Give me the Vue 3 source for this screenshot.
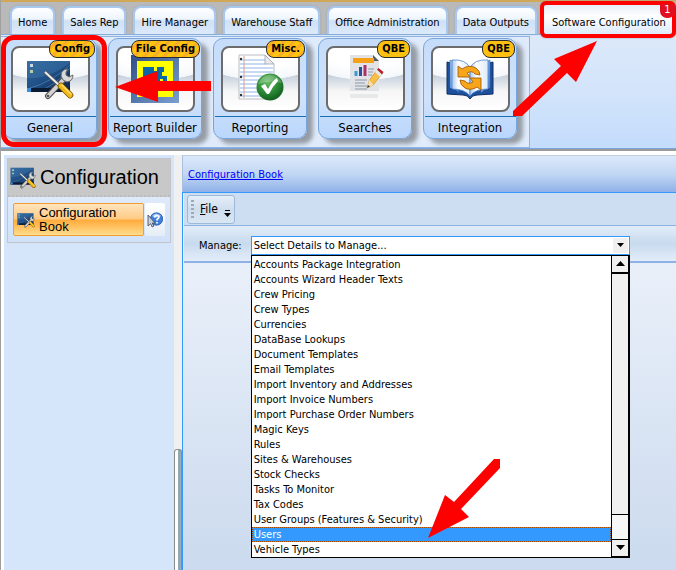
<script setup>
import { ref } from 'vue'

const tabs = [
  { name: 'Home' },
  { name: 'Sales Rep' },
  { name: 'Hire Manager' },
  { name: 'Warehouse Staff' },
  { name: 'Office Administration' },
  { name: 'Data Outputs' },
  { name: 'Software Configuration', active: true, count: 1 },
]

const tiles = [
  { name: 'General', badge: 'Config', icon: 'desk', striped: true, marked: true },
  { name: 'Report Builder', badge: 'File Config', icon: 'builder', striped: true },
  { name: 'Reporting', badge: 'Misc.', icon: 'report', striped: true },
  { name: 'Searches', badge: 'QBE', icon: 'search' },
  { name: 'Integration', badge: 'QBE', icon: 'sync' },
]

const options = [
  'Accounts Package Integration',
  'Accounts Wizard Header Texts',
  'Crew Pricing',
  'Crew Types',
  'Currencies',
  'DataBase Lookups',
  'Document Templates',
  'Email Templates',
  'Import Inventory and Addresses',
  'Import Invoice Numbers',
  'Import Purchase Order Numbers',
  'Magic Keys',
  'Rules',
  'Sites & Warehouses',
  'Stock Checks',
  'Tasks To Monitor',
  'Tax Codes',
  'User Groups (Features & Security)',
  'Users',
  'Vehicle Types',
]
const selected = ref('Users')
</script>

<template>
  <div class="app">
    <svg class="defs" width="0" height="0" aria-hidden="true">
      <defs>
        <linearGradient id="gDesk" x1="0" y1="0" x2="1" y2="1">
          <stop offset="0" stop-color="#2f6598" /><stop offset=".5" stop-color="#1f4f86" /><stop offset="1" stop-color="#0c2244" />
        </linearGradient>
        <linearGradient id="gBuild" x1="0" y1="0" x2="1" y2="1">
          <stop offset="0" stop-color="#2f4f86" /><stop offset="1" stop-color="#7ba0d0" />
        </linearGradient>
        <radialGradient id="gTick" cx=".4" cy=".3" r=".75">
          <stop offset="0" stop-color="#6fc06a" /><stop offset=".55" stop-color="#2c8a35" /><stop offset="1" stop-color="#0e5a1a" />
        </radialGradient>
        <linearGradient id="gPage" x1="0" y1="0" x2="1" y2="0">
          <stop offset="0" stop-color="#a9c8f0" /><stop offset=".35" stop-color="#ffffff" /><stop offset="1" stop-color="#dcebfb" />
        </linearGradient>
        <linearGradient id="gPageBlue" x1="0" y1="0" x2="1" y2="1">
          <stop offset="0" stop-color="#b9d4f4" /><stop offset="1" stop-color="#3f80cf" />
        </linearGradient>
        <symbol id="i-desk" viewBox="0 0 48 42">
          <rect x="1" y="3" width="43" height="31" fill="url(#gDesk)" />
          <path d="M1 20Q20 22 44 5V3H1z" fill="#4a80b4" opacity=".35" />
          <path d="M10 34Q30 28 44 10M4 30Q26 24 44 7" stroke="#79a7d2" stroke-width=".7" fill="none" opacity=".6" />
          <rect x="1" y="30" width="43" height="4" fill="#0a1a33" />
          <rect x="1" y="30" width="4" height="4" fill="#3b8ed8" />
          <rect x="4" y="6" width="3" height="3" fill="#c7d7e6" /><rect x="4" y="12" width="3" height="3" fill="#b8cf9a" />
          <path d="M22 38 39 20" stroke="#4c4c4c" stroke-width="6" stroke-linecap="round" />
          <path d="M22 38 39 20" stroke="#d2d2d2" stroke-width="4" stroke-linecap="round" />
          <path d="M42 11q-7 0-7 7 1 5 6 6 6-1 6-7l-4 2-3-2 0-3z" fill="#dadada" stroke="#666" stroke-width="1" />
          <circle cx="22" cy="38" r="1.3" fill="#555" />
          <path d="M19 14 34 28" stroke="#555" stroke-width="3.4" />
          <path d="M19 14 34 28" stroke="#ececec" stroke-width="2" />
          <path d="M35 28 44 37" stroke="#7a5a00" stroke-width="6.600" stroke-linecap="round" />
          <path d="M35 28 44 37" stroke="#f3b719" stroke-width="5" stroke-linecap="round" />
          <path d="M36 27 45 36" stroke="#ffe27a" stroke-width="1.300" stroke-linecap="round" />
        </symbol>
        <symbol id="i-builder" viewBox="0 0 48 48">
          <rect width="48" height="48" fill="url(#gBuild)" />
          <rect x="6" y="6" width="36" height="36" fill="#ffff00" />
          <path d="M12 12h11v4h3v-4h7v5h-2v4h5v7h-4v-4h-3v8h-7v4H12z" fill="#0a66a6" />
        </symbol>
        <symbol id="i-report" viewBox="0 0 48 48">
          <path d="M3 2h26l9 9v35H3z" fill="#fff" stroke="#b9bcc4" />
          <path d="M4 7h25M4 11h26M4 15h33M4 19h33M4 23h33M4 27h33M4 31h33M4 35h33M4 39h33M4 43h33" stroke="#8fb5e6" stroke-width="1" />
          <path d="M8 3v42" stroke="#e0a08c" />
          <circle cx="5" cy="6" r="1.2" fill="#333" /><circle cx="5" cy="24" r="1.2" fill="#333" /><circle cx="5" cy="42" r="1.2" fill="#333" />
          <path d="M29 2v9h9z" fill="#e8eaee" stroke="#9da3ad" stroke-width=".8" />
          <g transform="translate(0 -1)">
            <circle cx="34" cy="35" r="13.500" fill="url(#gTick)" />
            <path d="M22 32q4-9 12-9t12 8q-12-3-24 1z" fill="#fff" opacity=".22" />
            <path d="M25 34l4-2 3 5q4-8 9-11l1 3q-6 6-9 13h-2q-3-4-6-8z" fill="#fff" />
          </g>
        </symbol>
        <symbol id="i-search" viewBox="0 0 40 48">
          <path d="M5 2h23l6 6v30H5z" fill="#e2e3e7" />
          <path d="M28 2v6h6z" fill="#555b63" />
          <rect x="8" y="5" width="21" height="5" fill="#f7a11b" />
          <path d="M11 23v-5" stroke="#3a9bd0" stroke-width="3" />
          <path d="M15.500 23v-9" stroke="#2f50a0" stroke-width="3" />
          <path d="M20 23V12" stroke="#a8336a" stroke-width="3" />
          <path d="M23 16h6M23 19h5M23 22h4M10 27h12M10 30h10M10 33h12M10 36h12" stroke="#a9b2bd" stroke-width="1.500" />
          <path d="M22 35l2.500-8L32 17l5 4-9 11z" fill="#f6bf45" stroke="#d48d1f" stroke-width=".7" />
          <path d="M22 35l2.500-8 4 5z" fill="#f7dfb4" /><path d="M22 35l1-3 2 1.500z" fill="#333" />
          <path d="M30 19l2-3 6 4-3 4z" fill="#e8e8e8" /><path d="M32 16.500l1.500-1.500 5 4-1.500 2.500z" fill="#b5202c" />
          <path d="M5 41h28v4H5z" fill="#dcdde0" opacity=".6" />
        </symbol>
        <symbol id="i-sync" viewBox="0 0 48 42">
          <path d="M1 4v32l16 1q5 0 7 4 2-4 7-4l16-1V4l-4 1v26H5V5z" fill="#1e4f9c" stroke="#0e2f66" stroke-width="1" />
          <path d="M4 2q4 1 9 8v25q-4-5-9-5z" fill="url(#gPageBlue)" stroke="#2b62b0" stroke-width=".6" />
          <path d="M44 2q-4 1-9 8v25q4-5 9-5z" fill="url(#gPageBlue)" stroke="#2b62b0" stroke-width=".6" />
          <path d="M6 2q14-1 18 8v28q-5-7-18-7z" fill="url(#gPage)" stroke="#4a82cc" stroke-width=".8" />
          <path d="M42 2q-14-1-18 8v28q5-7 18-7z" fill="url(#gPage)" stroke="#4a82cc" stroke-width=".8" />
          <path d="M12 19V8l4 3q7-5 14-1 4 3 4 7l-5-1q-3-4-8-1l3 4z" fill="#f7a61c" stroke="#a85f05" stroke-width=".9" />
          <path d="M35 20v12l-4-3q-6 4-12 1-5-3-5-8l5 1q3 4 8 1l-3-4z" fill="#f7a61c" stroke="#a85f05" stroke-width=".9" />
        </symbol>
        <symbol id="i-help" viewBox="0 0 16 16">
          <circle cx="9.500" cy="7" r="6.200" fill="#3d7fdc" stroke="#2455a8" stroke-width=".8" />
          <path d="M5 4q4-5 9 0-4 3-9 0z" fill="#bcd9ff" opacity=".8" />
          <path d="M7.500 5.500q.3-2 2.200-2 2.200 0 2.200 1.800 0 1.200-1.900 2.200v1M10 10v1.600" stroke="#fff" stroke-width="1.700" fill="none" />
          <path d="M1 3v11l2.600-2.300 1.600 3.300 1.600-.8-1.500-3.200H8z" fill="#c9d0dc" stroke="#4a5566" stroke-width=".9" />
        </symbol>
      </defs>
    </svg>

    <header class="ribbon">
      <nav class="tabs">
        <button v-for="tab in tabs" :key="tab.name" type="button" class="tab" :class="{ active: tab.active }">
          {{ tab.name }}
          <span v-if="tab.count" class="count">{{ tab.count }}</span>
          <svg v-if="tab.active" class="tab-arrow" width="86" height="77" viewBox="0 0 86 77" aria-hidden="true">
            <path d="M85 1 42 19l7 7L1 71v5h9l45-43 9 9z" fill="#f00" />
          </svg>
        </button>
      </nav>
      <div class="band">
        <div class="group">
          <button v-for="tile in tiles" :key="tile.name" type="button" class="tile" :class="{ marked: tile.marked }">
            <span class="frame"><svg class="art" :class="tile.icon" aria-hidden="true"><use :href="'#i-' + tile.icon" /></svg></span>
            <span class="badge" :class="{ striped: tile.striped }">{{ tile.badge }}</span>
            <span class="caption">{{ tile.name }}</span>
          </button>
          <svg class="group-arrow" width="98" height="34" viewBox="0 0 98 34" aria-hidden="true">
            <path d="M1 17 44 1v10h53v10H44v11z" fill="#f00" />
          </svg>
        </div>
      </div>
    </header>

    <div class="body">
      <aside class="side">
        <section class="card">
          <h1><svg width="26" height="23" aria-hidden="true"><use href="#i-desk" /></svg>Configuration</h1>
          <div class="entry">
            <button type="button" class="book">
              <svg width="18" height="16" aria-hidden="true"><use href="#i-desk" /></svg>
              <span>Configuration Book</span>
            </button>
            <button type="button" class="help" aria-label="Help"><svg width="16" height="16"><use href="#i-help" /></svg></button>
          </div>
        </section>
      </aside>
      <div class="splitter"><div class="thumb"></div></div>
      <main class="main">
        <div class="crumb"><a href="#book">Configuration Book</a></div>
        <div class="pane">
          <div class="toolbar">
            <button type="button" class="file">
              <span class="grip"></span>
              <span><u>F</u>ile</span>
              <svg class="more" width="7" height="7" viewBox="0 0 7 7" aria-hidden="true"><path d="M1 0h5v1H1zM0 3h7L3.500 7z" /></svg>
            </button>
          </div>
          <div class="manage">
            <label for="details">Manage:</label>
            <div class="combo">
              <select id="details"><option>Select Details to Manage...</option></select>
              <span class="drop"><svg width="7" height="4" viewBox="0 0 7 4"><path d="M0 0h7L3.500 4z" /></svg></span>
              <div class="popup">
                <ul role="listbox" aria-label="Details">
                  <li v-for="o in options" :key="o" role="option" :aria-selected="o === selected" :class="{ chosen: o === selected }" @click="selected = o">{{ o }}</li>
                </ul>
                <div class="scroll">
                  <button type="button" aria-label="Scroll up"><svg width="9" height="5" viewBox="0 0 9 5"><path d="M0 5h9L4.500 0z" /></svg></button>
                  <div class="handle"></div>
                  <div class="track"></div>
                  <button type="button" class="down" aria-label="Scroll down"><svg width="9" height="5" viewBox="0 0 9 5"><path d="M0 0h9L4.500 5z" /></svg></button>
                </div>
                <svg class="list-arrow" width="73" height="80" viewBox="0 0 73 80" aria-hidden="true">
                  <path d="M0 79 17 36l9 7L66 0h6v9L33 50l8 8z" fill="#f00" />
                </svg>
              </div>
            </div>
          </div>
        </div>
      </main>
    </div>
  </div>
</template>

<style>
body { overflow: hidden; }
</style>

<style scoped>
.app {
  display: flex;
  flex-direction: column;
  min-height: 100vh;
  box-sizing: border-box;
  border-left: 1px solid #a0a0a0;
  background: #fff;
  color: #000;
  font: 11px/15px Tahoma, "DejaVu Sans Condensed", "DejaVu Sans", sans-serif;
}
.app *, .app *::before { box-sizing: border-box; }
.defs { position: absolute; }
button { font: inherit; color: inherit; padding: 0; margin: 0; border: 0; background: none; }

.ribbon { border-top: 2px solid #d0a858; background: #b9b9b9; border-bottom: 2px solid #9a9a9a; }
.tabs { display: flex; gap: 7px; padding: 4px 0 0 9px; height: 32px; }
.tab {
  position: relative;
  flex: none;
  padding: 3px 6px 0;
  white-space: nowrap;
  border: 2px solid #a8c8ee;
  border-bottom: 0;
  border-radius: 8px 8px 0 0;
  background: linear-gradient(#fff 0, #eef5fd 40%, #cfe1f6 50%, #dceafa 100%);
  box-shadow: 0 0 2px #8fa3bb;
}
.tab.active {
  z-index: 2;
  margin: -5px 0 -4px -4px;
  padding: 5px 6px 0 8px;
  border: 4px solid #f00;
  border-radius: 6px;
  background: linear-gradient(#e8eef6 0, #fff 40%, #dceafa 100%);
}
.count {
  position: absolute;
  top: -1px;
  right: -3px;
  width: 15px;
  height: 14px;
  border-radius: 0 0 7px 7px;
  background: #e01020;
  color: #fff;
  line-height: 12px;
}
.tab-arrow { position: absolute; left: -32px; top: 35px; }

.band {
  border-top: 1px solid #86b0e0;
  border-bottom: 1px solid #7ba4de;
  padding-top: 1px;
  background: linear-gradient(#dce9fa, #d3e4fa 50%, #c3dcfc);
}
.group {
  position: relative;
  display: flex;
  gap: 11px;
  width: max-content;
  height: 112px;
  padding: 1px 12px 8px 2px;
  border: 1px solid #8fb3e2;
  border-left: 0;
  background: #dfebfb;
}
.tile {
  position: relative;
  display: flex;
  flex-direction: column;
  align-items: center;
  width: 94px;
  height: 101px;
  padding-top: 7px;
  border: 1px solid #78a4dc;
  border-radius: 10px;
  background: linear-gradient(#c5dcfa, #cfe2fb 60%, #b9d6fd);
  box-shadow: 6px 5px 4px #959ca6;
}
.tile.marked::before {
  content: "";
  position: absolute;
  z-index: 2;
  inset: -4px -11px -9px -3px;
  border: 5px solid #f00;
  border-radius: 13px;
}
.frame {
  display: flex;
  align-items: center;
  justify-content: center;
  width: 79px;
  height: 69px;
  border: 2px solid #6c6c6c;
  border-radius: 8px;
  background: radial-gradient(ellipse 70px 32px at 50% 0, #fff 0 60%, #f4f7fa 98%, transparent 100%), linear-gradient(#e4eaf1, #c5d0dd 44%, #f6f6f6 70%, #fff);
}
.art { width: 48px; height: 42px; }
.art.builder { height: 48px; }
.art.report { height: 48px; margin-bottom: 4px; }
.art.search { width: 40px; height: 48px; margin-bottom: 4px; }
.badge {
  position: absolute;
  top: 1px;
  right: 1px;
  height: 18px;
  padding: 0 4px;
  border: 1px solid #2b2b2b;
  border-radius: 8px;
  background: #fdc010;
  font-weight: bold;
  line-height: 16px;
}
.badge.striped { background: repeating-linear-gradient(135deg, #ffc40c 0 4px, #f9ab2c 4px 7px); }
.caption {
  width: 91px;
  margin-top: 4px;
  border-top: 1px solid #1670b8;
  font-size: 13px;
  line-height: 21px;
  white-space: nowrap;
}
.group-arrow { position: absolute; left: 113px; top: 33px; }

.body { flex: 1; display: flex; padding: 4px 0 0 3px; }
.side { width: 170px; flex: none; padding: 3px; background: #d5e6fb; }
.card { border: 1px solid #c3c5c9; }
h1 {
  display: flex;
  align-items: center;
  gap: 4px;
  height: 38px;
  margin: 0;
  padding-left: 2px;
  background: #c8c8c8;
  border-bottom: 2px dotted #bcbcbc;
  font: 20px/24px "Liberation Sans", Arial, sans-serif;
}
.entry { display: flex; gap: 1px; height: 45px; padding: 6px 5px; background: linear-gradient(#dfeafa, #cfe1f9); }
.book {
  flex: 1;
  display: flex;
  align-items: center;
  gap: 4px;
  padding: 0 3px;
  border: 1px solid #f0a030;
  border-radius: 2px;
  background: linear-gradient(#ffe4bd 0, #ffcb85 48%, #ffab3c 52%, #ffdc8c 100%);
  font: 13px/14px "Liberation Sans", Arial, sans-serif;
  text-align: left;
}
.book span { flex: 1; }
.book svg { flex: none; }
.help { display: flex; align-items: center; justify-content: center; width: 20px; background: linear-gradient(#fff, #e6edf7); border-radius: 2px; }

.splitter { width: 8px; flex: none; background: #f0f0f0; }
.thumb { height: calc(100% - 294px); margin-top: 294px; border: 1px solid #8c8c8c; border-bottom: 0; border-radius: 3px 3px 0 0; background: linear-gradient(90deg, #fff 0 50%, #7f9ba8 60%, #9fb4be); }

.main { flex: 1; min-width: 0; display: flex; flex-direction: column; }
.crumb { height: 37px; padding: 11px 5px; border-top: 1px solid #c0cfdd; border-left: 1px solid #a9bfdc; background: linear-gradient(#dbe8fa, #c2d7f4 50%, #8fb1e7); }
.crumb a { color: #00f; }
.pane { flex: 1; border: 1px solid #3399ff; border-width: 1px 0 0 1px; padding-left: 1px; background: linear-gradient(#e8eff9 80px, #cbdaee); }
.toolbar { height: 32px; padding: 2px 3px; background: #cddef3; }
.file {
  display: flex;
  align-items: center;
  gap: 6px;
  height: 29px;
  padding: 0 3px;
  border: 1px solid #9db9d8;
  border-radius: 3px;
  background: linear-gradient(#e6eef8, #cfdeef 50%, #d9e6f3);
  font-size: 12px;
}
.grip { width: 3px; height: 20px; background: repeating-linear-gradient(#a3a9b0 0 2px, transparent 2px 4px); }
.more { margin-top: 8px; }
.manage {
  display: flex;
  align-items: center;
  gap: 9px;
  height: 38px;
  padding: 3px 46px 0 15px;
  border-top: 1px solid #8fb2e6;
  border-bottom: 2px solid #8fb2e6;
  background: linear-gradient(#e2edf9, #c8daee 50%, #e3edf9);
}
.combo { position: relative; flex: 1; display: flex; height: 19px; border: 1px solid #3399ff; background: #fff; }
.combo select { appearance: none; flex: 1; min-width: 0; margin: 0; padding: 0 2px; border: 0; border-radius: 0; background: #fff; color: #000; font: inherit; }
.drop { display: flex; align-items: center; justify-content: center; width: 15px; margin: 1px; background: #f0f0f0; }
.popup { position: absolute; z-index: 3; top: 18px; left: -1px; right: -1px; display: flex; padding-top: 1px; border: 1px solid #000; border-right-width: 2px; background: #fff; }
ul { flex: 1; margin: 0; padding: 0; list-style: none; }
li { padding: 0 2px; white-space: nowrap; height: 15px; line-height: 15px; }
.chosen { background: #3399ff; color: #fff; outline: 1px dotted #a04800; outline-offset: -1px; }
.scroll { width: 17px; margin-top: -1px; display: flex; flex-direction: column; border-left: 1px solid #000; background: #f0f0f0; }
.scroll button { display: flex; align-items: center; justify-content: center; height: 18px; border-bottom: 2px solid #000; }
.scroll .down { border: 1px solid #000; border-width: 1px 0 1px 0; }
.handle { flex: 1; border-bottom: 1px solid #000; }
.track { height: 24px; background: #f7f7f7; }
.list-arrow { position: absolute; left: 176px; bottom: 18px; }
</style>
